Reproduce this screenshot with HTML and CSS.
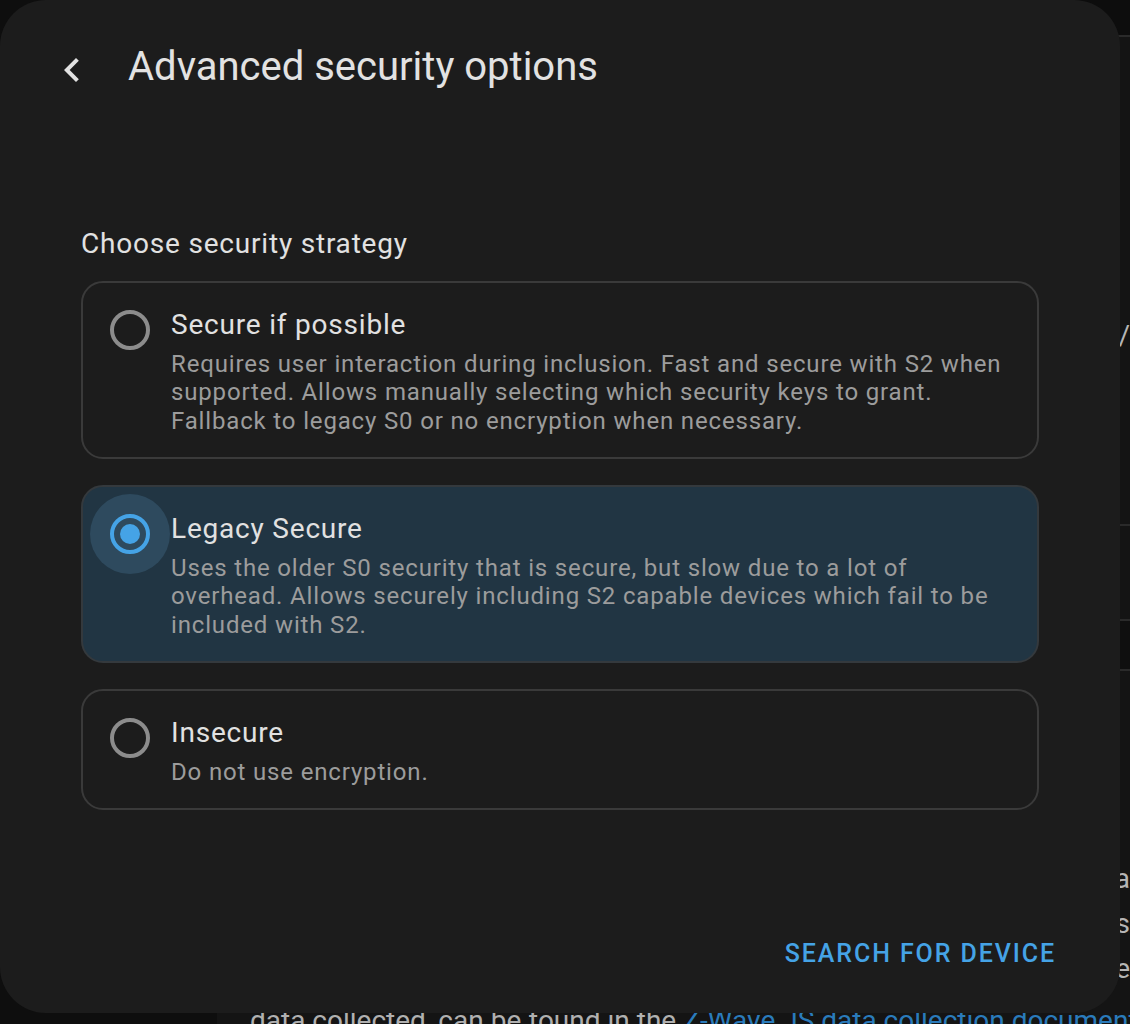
FILE: index.html
```html
<!DOCTYPE html>
<html lang="en">
<head>
<meta charset="utf-8">
<title>Advanced security options</title>
<link rel="stylesheet" href="styles.css">
</head>
<body>
<div class="page">
  <aside class="sidebar"></aside>
  <main class="main">
    <div class="toolbar"></div>
    <section class="bg-sec bg-sec1">
      <p class="bg-line">https:/</p>
    </section>
    <section class="bg-sec bg-sec2"></section>
    <section class="bg-band"></section>
    <section class="bg-sec3">
      <p class="bg-line">Z-Wa</p>
      <p class="bg-line">is</p>
      <p class="bg-line">one</p>
      <p class="bg-text">data collected, can be found in the <a class="bg-link">Z-Wave JS data collection documentation</a>.</p>
    </section>
  </main>
</div>

<div class="dialog">
  <div class="header">
    <svg class="back" viewBox="0 0 24 24"><path d="M15.41,16.58L10.83,12L15.41,7.41L14,6L8,12L14,18L15.41,16.58Z"/></svg>
    <h1 class="title">Advanced security options</h1>
  </div>
  <div class="body">
    <p class="strategy">Choose security strategy</p>
    <div class="options">
      <div class="option">
        <div class="radio"><div class="ring"></div></div>
        <div class="opt-text">
          <div class="opt-label">Secure if possible</div>
          <div class="opt-desc">Requires user interaction during inclusion. Fast and secure with S2 when supported. Allows manually selecting which security keys to grant. Fallback to legacy S0 or no encryption when necessary.</div>
        </div>
      </div>
      <div class="option selected">
        <div class="radio on"><div class="ring"><div class="dot"></div></div></div>
        <div class="opt-text">
          <div class="opt-label">Legacy Secure</div>
          <div class="opt-desc">Uses the older S0 security that is secure, but slow due to a lot of overhead. Allows securely including S2 capable devices which fail to be included with S2.</div>
        </div>
      </div>
      <div class="option">
        <div class="radio"><div class="ring"></div></div>
        <div class="opt-text">
          <div class="opt-label">Insecure</div>
          <div class="opt-desc">Do not use encryption.</div>
        </div>
      </div>
    </div>
  </div>
  <div class="footer">
    <span class="action">Search for device</span>
  </div>
</div>
</body>
</html>
```
FILE: styles.css
```css
html, body {
  margin: 0;
  padding: 0;
  height: 100%;
  overflow: hidden;
  background: #0e0e0e;
  font-family: Roboto, "Noto Sans", "Liberation Sans", sans-serif;
}

/* background page */
.page {
  display: flex;
  width: 1130px;
  height: 1024px;
}
.sidebar {
  width: 217px;
  flex-shrink: 0;
  background: #0e0e0e;
}
.main {
  flex: 1;
  display: flex;
  flex-direction: column;
  background: #141414;
}
.main > * {
  flex-shrink: 0;
}
.toolbar {
  height: 35px;
  background: #0d0d0d;
  border-bottom: 2px solid #2a2a2a;
}
.bg-sec {
  border-bottom: 2px solid #2a2a2a;
  padding-left: 33px;
}
.bg-sec1 {
  height: 487px;
}
.bg-sec2 {
  height: 93px;
}
.bg-band {
  height: 48px;
  background: #0f0f0f;
  border-bottom: 2px solid #2a2a2a;
}
.bg-line {
  margin: 0;
  width: 880px;
  text-align: right;
  white-space: nowrap;
  font-size: 28px;
  line-height: 45px;
  color: #b5b5b5;
}
.bg-sec1 .bg-line {
  margin-top: 276px;
}
.bg-sec3 {
  padding: 185px 0 0 33px;
}
.bg-text {
  margin: 7px 0 0;
  white-space: nowrap;
  font-size: 28px;
  line-height: 45px;
  color: #b0b0b0;
}
.bg-link {
  color: #2a7bbb;
}

/* dialog */
.dialog {
  position: absolute;
  left: 0;
  top: 0;
  width: 1120px;
  height: 1013px;
  background: #1c1c1c;
  border-radius: 46px;
  display: flex;
  flex-direction: column;
}
.header {
  display: flex;
  align-items: flex-start;
  gap: 33px;
  padding: 43px 0 0 48px;
}
.back {
  width: 48px;
  height: 48px;
  margin-top: 3px;
  fill: #e2e2e2;
  flex-shrink: 0;
}
.title {
  margin: 0;
  font-size: 40px;
  line-height: 48px;
  font-weight: 400;
  color: #e2e2e2;
  margin-left: -1px;
}
.body {
  padding: 0 81px;
  margin-top: 132px;
}
.strategy {
  margin: 0 0 19px;
  font-size: 28px;
  line-height: 36px;
  letter-spacing: 0.8px;
  color: #e1e1e1;
}
.options {
  display: flex;
  flex-direction: column;
  gap: 26px;
}
.option {
  display: flex;
  align-items: flex-start;
  border: 2px solid #3a3a3a;
  border-radius: 22px;
  padding: 7px 22px 22px 7px;
}
.option.selected {
  background: #213543;
  border-color: #34393d;
}
.radio {
  width: 80px;
  height: 80px;
  border-radius: 50%;
  display: flex;
  align-items: center;
  justify-content: center;
  flex-shrink: 0;
}
.radio.on {
  background: #2e4a5e;
}
.ring {
  width: 40px;
  height: 40px;
  box-sizing: border-box;
  border: 4px solid #8c8c8c;
  border-radius: 50%;
  display: flex;
  align-items: center;
  justify-content: center;
}
.radio.on .ring {
  border-color: #45a3e6;
}
.dot {
  width: 20px;
  height: 20px;
  border-radius: 50%;
  background: #45a3e6;
}
.opt-text {
  margin-left: 1px;
  padding-top: 17px;
}
.opt-label {
  font-size: 28px;
  line-height: 36px;
  letter-spacing: 0.8px;
  color: #e1e1e1;
}
.opt-desc {
  margin-top: 6.5px;
  font-size: 24px;
  line-height: 28.5px;
  letter-spacing: 0.84px;
  color: #9c9c9c;
}
.footer {
  margin-top: auto;
  display: flex;
  justify-content: flex-end;
  padding: 0 64px 41px 0;
}
.action {
  font-size: 25px;
  line-height: 36px;
  font-weight: 500;
  letter-spacing: 1.9px;
  text-transform: uppercase;
  color: #45a3e6;
}
```
